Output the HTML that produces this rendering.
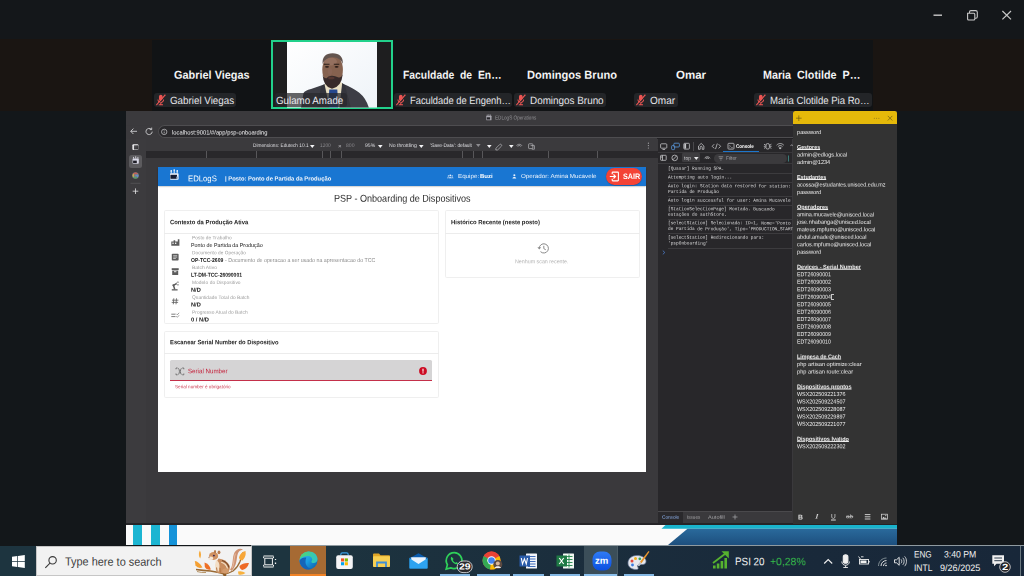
<!DOCTYPE html>
<html><head><meta charset="utf-8">
<style>
*{box-sizing:border-box;margin:0;padding:0}
html,body{width:1024px;height:576px;overflow:hidden;background:#111315;font-family:"Liberation Sans",sans-serif;}
.abs{position:absolute}
#root{position:absolute;left:0;top:0;width:1024px;height:576px;overflow:hidden;background:#111315}
.t{position:absolute;white-space:nowrap;transform-origin:0 50%;}
svg{position:absolute;overflow:visible}
</style></head><body><div id="root">
<div class="abs" style="left:0px;top:0px;width:1024px;height:576px;background:#13171a;"></div>
<div class="abs" style="left:0px;top:0px;width:1024px;height:39px;background:#14171a;"></div>
<div class="abs" style="left:0px;top:39px;width:1024px;height:71.5px;background:#1a1512;"></div>
<div class="abs" style="left:152px;top:39.5px;width:720.5px;height:71px;background:#111315;"></div>
<svg style="left:930px;top:8px" width="90" height="16" viewBox="0 0 90 16"><g fill="none" stroke="#c8c8c8" stroke-width="1.1"><path d="M3.5 7.2H12" stroke-width="1.4"/><path d="M37.6 5.200h6.200a1 1 0 0 1 1 1v4.800a1 1 0 0 1-1 1h-5.200a1 1 0 0 1-1-1z M39.500 5V4a1.400 1.400 0 0 1 1.400-1.400h4.800a1.600 1.600 0 0 1 1.600 1.600v4.600a1.400 1.400 0 0 1-1.400 1.400h-1"/><path d="M72.4 3l8.6 8.4M81 3l-8.6 8.4" stroke-width="1.2"/></g></svg>
<span class="t" style='left:174.01px;top:69px;font-size:11.5px;line-height:11.5px;color:#f4f4f4;font-weight:700;font-family:"Liberation Sans",sans-serif;transform:translateY(0.63px) rotate(.05deg) scaleX(0.9488);'>Gabriel Viegas</span>
<div class="abs" style="left:154.2px;top:92.7px;width:82.30000000000001px;height:14.2px;background:#232528;border-radius:3px"></div>
<svg style="left:155.2px;top:94px" width="11.800" height="11.800" viewBox="0 0 11 11"><g fill="#ec5553"><rect x="3.7" y="0.8" width="3.4" height="5.6" rx="1.7"/><path d="M2.3 5.2h.9c0 1.5 1 2.3 2.2 2.3s2.2-.8 2.200-2.300h.9c0 1.800-1.100 2.900-2.600 3.100V9.500H7.500v.9H3.300v-.9h1.600V8.300C3.400 8.100 2.300 7 2.300 5.200z"/></g><path d="M1.300 10.300L9.700 0.700" stroke="#ec5553" stroke-width="1.100" fill="none"/><path d="M2.100 10.900L10.300 1.400" stroke="#22252a" stroke-width=".7" fill="none"/></svg>
<span class="t" style='left:169.97px;top:94px;font-size:10.5px;line-height:10.5px;color:#e6e6ea;font-weight:400;font-family:"Liberation Sans",sans-serif;transform:translateY(0.99px) rotate(.05deg) scaleX(0.9337);'>Gabriel Viegas</span>
<span class="t" style='left:402.91px;top:69px;font-size:11.5px;line-height:11.5px;color:#f4f4f4;font-weight:700;font-family:"Liberation Sans",sans-serif;transform:translateY(0.63px) rotate(.05deg) scaleX(0.9016);'>Faculdade&nbsp; de&nbsp; En…</span>
<div class="abs" style="left:394.2px;top:92.7px;width:117.80000000000001px;height:14.2px;background:#232528;border-radius:3px"></div>
<svg style="left:395.2px;top:94px" width="11.800" height="11.800" viewBox="0 0 11 11"><g fill="#ec5553"><rect x="3.7" y="0.8" width="3.4" height="5.6" rx="1.7"/><path d="M2.3 5.2h.9c0 1.5 1 2.3 2.2 2.3s2.2-.8 2.200-2.300h.9c0 1.800-1.100 2.900-2.600 3.100V9.500H7.500v.9H3.300v-.9h1.600V8.300C3.400 8.100 2.300 7 2.300 5.200z"/></g><path d="M1.300 10.300L9.700 0.700" stroke="#ec5553" stroke-width="1.100" fill="none"/><path d="M2.100 10.900L10.300 1.400" stroke="#22252a" stroke-width=".7" fill="none"/></svg>
<span class="t" style='left:409.97px;top:94px;font-size:10.5px;line-height:10.5px;color:#e6e6ea;font-weight:400;font-family:"Liberation Sans",sans-serif;transform:translateY(0.99px) rotate(.05deg) scaleX(0.8904);'>Faculdade de Engenh…</span>
<span class="t" style='left:527.31px;top:69px;font-size:11.5px;line-height:11.5px;color:#f4f4f4;font-weight:700;font-family:"Liberation Sans",sans-serif;transform:translateY(0.63px) rotate(.05deg) scaleX(0.9651);'>Domingos Bruno</span>
<div class="abs" style="left:514.2px;top:92.7px;width:91.79999999999995px;height:14.2px;background:#232528;border-radius:3px"></div>
<svg style="left:515.2px;top:94px" width="11.800" height="11.800" viewBox="0 0 11 11"><g fill="#ec5553"><rect x="3.7" y="0.8" width="3.4" height="5.6" rx="1.7"/><path d="M2.3 5.2h.9c0 1.5 1 2.3 2.2 2.3s2.2-.8 2.200-2.300h.9c0 1.800-1.100 2.900-2.600 3.100V9.500H7.500v.9H3.300v-.9h1.600V8.300C3.400 8.100 2.300 7 2.300 5.200z"/></g><path d="M1.300 10.300L9.700 0.700" stroke="#ec5553" stroke-width="1.100" fill="none"/><path d="M2.100 10.900L10.300 1.400" stroke="#22252a" stroke-width=".7" fill="none"/></svg>
<span class="t" style='left:529.97px;top:94px;font-size:10.5px;line-height:10.5px;color:#e6e6ea;font-weight:400;font-family:"Liberation Sans",sans-serif;transform:translateY(0.99px) rotate(.05deg) scaleX(0.9414);'>Domingos Bruno</span>
<span class="t" style='left:676.31px;top:69px;font-size:11.5px;line-height:11.5px;color:#f4f4f4;font-weight:700;font-family:"Liberation Sans",sans-serif;transform:translateY(0.63px) rotate(.05deg) scaleX(0.9993);'>Omar</span>
<div class="abs" style="left:634.2px;top:92.7px;width:43.799999999999955px;height:14.2px;background:#232528;border-radius:3px"></div>
<svg style="left:635.2px;top:94px" width="11.800" height="11.800" viewBox="0 0 11 11"><g fill="#ec5553"><rect x="3.7" y="0.8" width="3.4" height="5.6" rx="1.7"/><path d="M2.3 5.2h.9c0 1.5 1 2.3 2.2 2.3s2.2-.8 2.200-2.300h.9c0 1.800-1.100 2.900-2.600 3.100V9.500H7.500v.9H3.300v-.9h1.600V8.300C3.400 8.100 2.300 7 2.300 5.200z"/></g><path d="M1.300 10.300L9.700 0.700" stroke="#ec5553" stroke-width="1.100" fill="none"/><path d="M2.100 10.900L10.300 1.400" stroke="#22252a" stroke-width=".7" fill="none"/></svg>
<span class="t" style='left:649.97px;top:94px;font-size:10.5px;line-height:10.5px;color:#e6e6ea;font-weight:400;font-family:"Liberation Sans",sans-serif;transform:translateY(0.99px) rotate(.05deg) scaleX(0.9538);'>Omar</span>
<span class="t" style='left:762.91px;top:69px;font-size:11.5px;line-height:11.5px;color:#f4f4f4;font-weight:700;font-family:"Liberation Sans",sans-serif;transform:translateY(0.63px) rotate(.05deg) scaleX(0.9352);'>Maria&nbsp; Clotilde&nbsp; P…</span>
<div class="abs" style="left:754.2px;top:92.7px;width:117.79999999999995px;height:14.2px;background:#232528;border-radius:3px"></div>
<svg style="left:755.2px;top:94px" width="11.800" height="11.800" viewBox="0 0 11 11"><g fill="#ec5553"><rect x="3.7" y="0.8" width="3.4" height="5.6" rx="1.7"/><path d="M2.3 5.2h.9c0 1.5 1 2.3 2.2 2.3s2.2-.8 2.200-2.300h.9c0 1.800-1.100 2.900-2.600 3.100V9.500H7.500v.9H3.300v-.9h1.600V8.300C3.400 8.100 2.300 7 2.300 5.200z"/></g><path d="M1.300 10.300L9.700 0.700" stroke="#ec5553" stroke-width="1.100" fill="none"/><path d="M2.100 10.900L10.300 1.400" stroke="#22252a" stroke-width=".7" fill="none"/></svg>
<span class="t" style='left:769.97px;top:94px;font-size:10.5px;line-height:10.5px;color:#e6e6ea;font-weight:400;font-family:"Liberation Sans",sans-serif;transform:translateY(0.99px) rotate(.05deg) scaleX(0.9121);'>Maria Clotilde Pia Ro…</span>
<div class="abs" style="left:271px;top:40px;width:122.2px;height:69.4px;background:#1e1e1f;border:2px solid #22d18b"></div>
<svg style="left:287px;top:42.200px" width="90" height="65.600" viewBox="0 0 90 65.600">
<defs><filter id="bl" x="-10%" y="-10%" width="120%" height="120%"><feGaussianBlur stdDeviation="0.750"/></filter>
<clipPath id="vc"><rect x="0" y="0" width="90" height="65.600"/></clipPath>
<linearGradient id="wg" x1="0" y1="0" x2="1" y2="1"><stop offset="0" stop-color="#ffffff"/><stop offset="1" stop-color="#eef3f8"/></linearGradient></defs>
<rect width="90" height="65.600" fill="url(#wg)"/>
<g clip-path="url(#vc)" filter="url(#bl)">
<path d="M14 66 L16.500 51 Q18 48.500 24 47 L37 42.500 L46 46 L55.500 41.500 Q66 46 72 50.500 Q79 56 82 66 Z" fill="#3d3e45"/>
<path d="M36.500 43.500 L41 39 L53 39 L56 42.500 L54 66 L38 66 Z" fill="#eadfc4"/>
<path d="M42.300 47.500 L50.300 47.500 L51.500 66 L41 66 Z" fill="#25468e"/>
<path d="M34 44.500 L37.500 42 L42.500 66 L30 66Z" fill="#35363c"/>
<path d="M58 43.500 L55.200 41 L52.300 66 L64 66Z" fill="#35363c"/>
<ellipse cx="45.600" cy="27.800" rx="10.300" ry="15.800" fill="#86624f"/>
<ellipse cx="43.500" cy="19.500" rx="6.500" ry="4" fill="#94705f"/>
<ellipse cx="43" cy="29.500" rx="2.300" ry="3.400" fill="#8a6555"/>
<path d="M35.500 22 Q35 11.300 45.600 11.300 Q56.200 11.300 55.900 22 Q54 15.800 45.600 15.300 Q37.800 15.800 35.500 22Z" fill="#645550"/>
<path d="M35.600 33 Q36.500 45 45 46.800 Q54.500 45 55.800 32 Q54 36.500 51 35.300 Q48 33.500 44.500 33.700 Q41 33.700 39.500 36.300 Q36.800 36.500 35.600 33Z" fill="#382c2b"/>
<ellipse cx="44.300" cy="36" rx="3.300" ry="1.300" fill="#553730"/>
<path d="M37 22.300h5.500M46.800 22.300h5.500" stroke="#2a1c19" stroke-width="1.100"/>
<ellipse cx="40" cy="24.800" rx="2" ry=".9" fill="#2a1c18"/><ellipse cx="49.600" cy="24.800" rx="2" ry=".9" fill="#2a1c18"/>
</g></svg>
<div class="abs" style="left:274.5px;top:93px;width:72.2px;height:13.8px;background:rgba(40,40,44,0.72);border-radius:3px"></div>
<span class="t" style='left:276.37px;top:94px;font-size:10.5px;line-height:10.5px;color:#e9e9ee;font-weight:400;font-family:"Liberation Sans",sans-serif;transform:translateY(0.99px) rotate(.05deg) scaleX(0.9290);'>Gulamo Amade</span>
<div class="abs" style="left:0;top:0;width:1024px;height:576px;filter:blur(.32px)">
<div class="abs" style="left:126px;top:110.5px;width:771px;height:434.79999999999995px;background:#3a393c;"></div>
<div class="abs" style="left:126px;top:110.5px;width:666.5px;height:14.6px;background:#3b3a3d;"></div>
<span class="t" style='left:495.36px;top:115px;font-size:5.6px;line-height:5.6px;color:#908f93;font-weight:400;font-family:"Liberation Sans",sans-serif;transform:translateY(0.58px) rotate(.05deg) scaleX(0.8299);'>EDLogS Operations</span>
<svg style="left:486.200px;top:114.300px" width="6" height="6.600" viewBox="0 0 6 6.600"><rect x=".3" y="1.800" width="5.200" height="4.500" rx=".5" fill="#a9a8b0"/><rect x=".9" y="3.300" width="3.200" height="2.200" fill="#26252a"/><path d="M1.200 .5v1.500M2.900 .1v1.900M4.600 .5v1.500" stroke="#a9a8b0" stroke-width=".7"/></svg>
<div class="abs" style="left:126px;top:125.6px;width:666.5px;height:13px;background:#3b3a3d;"></div>
<div class="abs" style="left:157.8px;top:125.1px;width:640px;height:13.3px;background:#2a292c;border-radius:6.600px 0 0 6.600px;border:.8px solid #4e4d50;border-right:none"></div>
<div class="abs" style="left:657px;top:138.4px;width:135.5px;height:0.8px;background:#222124;"></div>
<span class="t" style='left:171.53px;top:129px;font-size:6.1px;line-height:6.1px;color:#ececee;font-weight:400;font-family:"Liberation Sans",sans-serif;transform:translateY(0.47px) rotate(.05deg) scaleX(0.9526);'>localhost:9001/#/app/psp-onboarding</span>
<svg style="left:129px;top:125.300px" width="44" height="13" viewBox="0 0 44 13"><g fill="none" stroke="#d0d0d2" stroke-width=".9"><path d="M8 6.300H1.800M4.400 3.600L1.700 6.300l2.700 2.700"/><path d="M22.300 4.300a3.100 3.100 0 1 0 .9 2.300M22.700 2.600v2h-2" /><circle cx="35.200" cy="6.900" r="2.700" stroke-width=".7"/><path d="M35.200 6.500v1.900M35.200 5.300v.6" stroke-width=".7"/></g></svg>
<div class="abs" style="left:126px;top:139px;width:20px;height:386.3px;background:#3c3b3e;"></div>
<div class="abs" style="left:129px;top:155px;width:12.5px;height:12.5px;background:#5c5b5e;border-radius:2.500px"></div>
<svg style="left:128px;top:140px" width="16" height="60" viewBox="0 0 16 60"><defs><linearGradient id="tg" x1="0" y1="0" x2="1" y2="1"><stop offset="0" stop-color="#5a595d"/><stop offset="1" stop-color="#2c2b2e"/></linearGradient></defs><rect x="4.400" y="4.200" width="6" height="5.900" rx="1" fill="#f2f2f4"/><rect x="5.900" y="5.300" width="4.500" height="4.300" rx=".5" fill="url(#tg)"/><rect x="4.600" y="18.400" width="6.200" height="5.400" rx=".7" fill="#d9d9e6"/><rect x="5.100" y="20.600" width="3.700" height="2.500" fill="#1f1e26"/><path d="M5.500 16.900v1.700M7.700 16.300v2.200M9.900 16.900v1.700" stroke="#e4e4ee" stroke-width=".8"/><circle cx="7.500" cy="35.500" r="3.300" fill="#7d7c80"/><g fill="none" stroke-width="1.300" opacity=".8"><path d="M5.600 34.200A2.300 2.300 0 0 1 9.200 33.900" stroke="#e0564a"/><path d="M5.600 36.800A2.300 2.300 0 0 1 5.600 34.200" stroke="#e8b83a"/><path d="M9.300 37A2.300 2.300 0 0 1 5.600 36.800" stroke="#4aa862"/><path d="M7.600 35.500h2.200A2.300 2.300 0 0 1 9.300 37" stroke="#5a8ee0"/></g><path d="M2.500 43.300h10" stroke="#5f5e62" stroke-width=".6"/><path d="M4.700 51.200h5.600M7.500 48.400v5.600" stroke="#e4e4e6" stroke-width=".8"/></svg>
<div class="abs" style="left:146px;top:139.1px;width:511.5px;height:12.2px;background:#3b3a3d;"></div>
<div class="abs" style="left:146px;top:150.7px;width:511.5px;height:7.6px;background:#29282b;"></div>
<div class="abs" style="left:206.2px;top:150.7px;width:0.9px;height:7.6px;background:#58575a;"></div>
<div class="abs" style="left:255.5px;top:150.7px;width:0.9px;height:7.6px;background:#58575a;"></div>
<div class="abs" style="left:321.5px;top:150.7px;width:0.9px;height:7.6px;background:#58575a;"></div>
<div class="abs" style="left:330.4px;top:150.7px;width:0.9px;height:7.6px;background:#58575a;"></div>
<div class="abs" style="left:341px;top:150.7px;width:0.9px;height:7.6px;background:#58575a;"></div>
<div class="abs" style="left:462px;top:150.7px;width:0.9px;height:7.6px;background:#58575a;"></div>
<div class="abs" style="left:472.5px;top:150.7px;width:0.9px;height:7.6px;background:#58575a;"></div>
<div class="abs" style="left:482px;top:150.7px;width:0.9px;height:7.6px;background:#58575a;"></div>
<div class="abs" style="left:548px;top:150.7px;width:0.9px;height:7.6px;background:#58575a;"></div>
<div class="abs" style="left:597px;top:150.7px;width:0.9px;height:7.6px;background:#58575a;"></div>
<span class="t" style='left:252.99px;top:143px;font-size:5.2px;line-height:5.2px;color:#dedee2;font-weight:400;font-family:"Liberation Sans",sans-serif;transform:translateY(0.04px) rotate(.05deg) scaleX(0.9175);'>Dimensions: Edutech 10.1</span>
<svg style="left:310.10px;top:144.60px" width="4.6" height="3.0" viewBox="0 0 4.6 3.0"><path d="M0 0H4.6L2.3 3.0z" fill="#f4f4f6"/></svg>
<span class="t" style='left:319.69px;top:143px;font-size:5.2px;line-height:5.2px;color:#8a898d;font-weight:400;font-family:"Liberation Sans",sans-serif;transform:translateY(0.04px) rotate(.05deg) scaleX(0.9322);'>1200</span>
<span class="t" style='left:338.46px;top:143px;font-size:5.6px;line-height:5.6px;color:#b5b4b8;font-weight:400;font-family:"Liberation Sans",sans-serif;transform:translateY(0.88px) rotate(.05deg) scaleX(1.1272);'>×</span>
<span class="t" style='left:345.69px;top:143px;font-size:5.2px;line-height:5.2px;color:#8a898d;font-weight:400;font-family:"Liberation Sans",sans-serif;transform:translateY(0.04px) rotate(.05deg) scaleX(0.9777);'>800</span>
<span class="t" style='left:365.49px;top:143px;font-size:5.2px;line-height:5.2px;color:#dedee2;font-weight:400;font-family:"Liberation Sans",sans-serif;transform:translateY(0.04px) rotate(.05deg) scaleX(0.9781);'>95%</span>
<svg style="left:377.95px;top:144.60px" width="4.6" height="3.0" viewBox="0 0 4.6 3.0"><path d="M0 0H4.6L2.3 3.0z" fill="#f4f4f6"/></svg>
<span class="t" style='left:388.69px;top:143px;font-size:5.2px;line-height:5.2px;color:#dedee2;font-weight:400;font-family:"Liberation Sans",sans-serif;transform:translateY(0.04px) rotate(.05deg) scaleX(0.9921);'>No throttling</span>
<svg style="left:418.95px;top:144.60px" width="4.6" height="3.0" viewBox="0 0 4.6 3.0"><path d="M0 0H4.6L2.3 3.0z" fill="#f4f4f6"/></svg>
<span class="t" style='left:429.69px;top:143px;font-size:5.2px;line-height:5.2px;color:#dedee2;font-weight:400;font-family:"Liberation Sans",sans-serif;transform:translateY(0.04px) rotate(.05deg) scaleX(0.9335);'>'Save-Data': default</span>
<svg style="left:475.95px;top:144.40px" width="4.6" height="3.0" viewBox="0 0 4.6 3.0"><path d="M0 0H4.6L2.3 3.0z" fill="#8c8b8f"/></svg>
<svg style="left:487.45px;top:144.60px" width="4.6" height="3.0" viewBox="0 0 4.6 3.0"><path d="M0 0H4.6L2.3 3.0z" fill="#f4f4f6"/></svg>
<svg style="left:509.25px;top:144.60px" width="4.6" height="3.0" viewBox="0 0 4.6 3.0"><path d="M0 0H4.6L2.3 3.0z" fill="#f4f4f6"/></svg>
<svg style="left:494px;top:141px" width="45" height="10" viewBox="0 0 45 10"><g fill="none" stroke="#b8b8bb" stroke-width=".7"><path d="M2 7.200l3.600-3.600a1.200 1.200 0 0 1 1.700 1.700L3.700 8.900 1.800 9z"/><path d="M22.500 4.800c1.200-2 4.300-2 5.500 0M23.800 5.600a1.500 1.500 0 0 1 2.900 0"/><rect x="34.600" y="2.800" width="4.200" height="4.800" rx=".6"/><path d="M36.600 4.600h3.800v3.600h-2.600"/></g></svg>
<svg style="left:647px;top:141.500px" width="3" height="8" viewBox="0 0 3 8"><g fill="#a8a8ab"><circle cx="1.400" cy="1.200" r=".6"/><circle cx="1.400" cy="3.600" r=".6"/><circle cx="1.400" cy="6" r=".6"/></g></svg>
<div class="abs" style="left:157.8px;top:166.8px;width:488.49999999999994px;height:305.2px;background:#ffffff;"></div>
<div class="abs" style="left:157.8px;top:166.8px;width:488.49999999999994px;height:19.1px;background:#1976d2;box-shadow:0 .8px 1.600px rgba(0,0,0,.35)"></div>
<svg style="left:169px;top:168.500px" width="11" height="12" viewBox="0 0 11 12"><rect x="1" y="4.200" width="8.600" height="6.600" rx=".8" fill="#eef3fa"/><rect x="1.400" y="5.800" width="6.600" height="4" fill="#141c33"/><rect x="7.300" y="7.600" width="1.800" height="2.200" fill="#9fb2cc"/><path d="M2.200 2.200v2.200M5.200 1.300v3M8.200 2.200v2.200" stroke="#eef3fa" stroke-width="1"/><circle cx="2.200" cy="1.900" r=".8" fill="#fff"/><circle cx="5.200" cy="1.100" r=".8" fill="#fff"/><circle cx="8.200" cy="1.900" r=".8" fill="#fff"/></svg>
<span class="t" style='left:188.31px;top:175px;font-size:8.2px;line-height:8.2px;color:#ffffff;font-weight:400;font-family:"Liberation Sans",sans-serif;transform:translateY(0.20px) rotate(.05deg) scaleX(0.9453);'>EDLogS</span>
<span class="t" style='left:224.95px;top:176px;font-size:5.9px;line-height:5.9px;color:#f2f6fc;font-weight:700;font-family:"Liberation Sans",sans-serif;transform:translateY(0.45px) rotate(.05deg) scaleX(0.9893);'>| Posto: Ponto de Partida da Produção</span>
<svg style="left:447.300px;top:174.300px" width="6.600" height="4.950" viewBox="0 0 8 6"><g fill="#e8f0fb"><circle cx="4" cy="1.700" r="1.100"/><circle cx="1.700" cy="2.300" r=".8"/><circle cx="6.300" cy="2.300" r=".8"/><path d="M2 5.200c0-1.600 4-1.600 4 0zM.2 5.200c0-1.200 1.300-1.500 2-1.300-.6.300-.8.800-.8 1.300zM7.800 5.200c0-1.200-1.300-1.500-2-1.300.6.300.8.800.8 1.300z"/></g></svg>
<span class="t" style='left:457.85px;top:174px;font-size:5.9px;line-height:5.9px;color:#eef4fc;font-weight:400;font-family:"Liberation Sans",sans-serif;transform:translateY(0.05px) rotate(.05deg) scaleX(1.0571);'>Equipe:</span>
<span class="t" style='left:479.95px;top:174px;font-size:5.9px;line-height:5.9px;color:#ffffff;font-weight:700;font-family:"Liberation Sans",sans-serif;transform:translateY(0.05px) rotate(.05deg) scaleX(1.0232);'>Buzi</span>
<svg style="left:511.700px;top:174.200px" width="5" height="5" viewBox="0 0 6 6"><g fill="#e8f0fb"><circle cx="2.800" cy="1.500" r="1.250"/><path d="M.5 5.400c0-2.600 4.600-2.600 4.600 0z"/></g></svg>
<span class="t" style='left:521.05px;top:174px;font-size:5.9px;line-height:5.9px;color:#eef4fc;font-weight:400;font-family:"Liberation Sans",sans-serif;transform:translateY(0.05px) rotate(.05deg) scaleX(1.0579);'>Operador: Amina Mucavele</span>
<div class="abs" style="left:605.6px;top:167.9px;width:36px;height:17px;background:#f44336;border-radius:8.500px;box-shadow:0 .5px 1px rgba(0,0,0,.3)"></div>
<svg style="left:608.500px;top:171.200px" width="11" height="11" viewBox="0 0 11 11"><g fill="none" stroke="#fff" stroke-width="1.100"><path d="M3.200 3.200V1.700a.6.600 0 0 1 .6-.6h5a.6.600 0 0 1 .6.600v7.600a.6.600 0 0 1-.6.600h-5a.6.600 0 0 1-.6-.6V7.800"/><path d="M.8 5.500h5.600M4.500 3.500l2 2-2 2"/></g></svg>
<span class="t" style='left:622.53px;top:173px;font-size:7.9px;line-height:7.9px;color:#ffffff;font-weight:700;font-family:"Liberation Sans",sans-serif;transform:translateY(0.02px) rotate(.05deg) scaleX(0.9176);'>SAIR</span>
<span class="t" style='left:333.70px;top:193px;font-size:10px;line-height:10px;color:#2a2a2a;font-weight:400;font-family:"Liberation Sans",sans-serif;transform:translateY(0.65px) rotate(.05deg) scaleX(0.9045);'>PSP - Onboarding de Dispositivos</span>
<div class="abs" style="left:163.6px;top:210.4px;width:275.1px;height:114.1px;background:#fff;border:.7px solid #efefef;border-radius:1.600px;"></div>
<div class="abs" style="left:163.6px;top:233.1px;width:275.1px;height:0.6px;background:#ececec;"></div>
<span class="t" style='left:169.92px;top:219px;font-size:6.3px;line-height:6.3px;color:#1d1d1d;font-weight:700;font-family:"Liberation Sans",sans-serif;transform:translateY(0.29px) rotate(.05deg) scaleX(0.9307);'>Contexto da Produção Ativa</span>
<span class="t" style='left:191.51px;top:236px;font-size:4.9px;line-height:4.9px;color:#9a9a9a;font-weight:400;font-family:"Liberation Sans",sans-serif;transform:translateY(0.27px) rotate(.05deg) scaleX(0.9776);letter-spacing:.05px;'>Posto de Trabalho</span>
<span class="t" style='left:191.46px;top:242px;font-size:5.7px;line-height:5.7px;color:#161616;font-weight:400;font-family:"Liberation Sans",sans-serif;transform:translateY(0.98px) rotate(.05deg) scaleX(0.9408);'>Ponto de Partida da Produção</span>
<span class="t" style='left:191.51px;top:251px;font-size:4.9px;line-height:4.9px;color:#9a9a9a;font-weight:400;font-family:"Liberation Sans",sans-serif;transform:translateY(0.17px) rotate(.05deg) scaleX(0.9683);letter-spacing:.05px;'>Documento de Operação</span>
<span class="t" style='left:191.46px;top:257px;font-size:5.7px;line-height:5.7px;color:#161616;font-weight:700;font-family:"Liberation Sans",sans-serif;transform:translateY(0.88px) rotate(.05deg) scaleX(0.8886);'>OP-TCC-2609</span>
<span class="t" style='left:191.51px;top:266px;font-size:4.9px;line-height:4.9px;color:#9a9a9a;font-weight:400;font-family:"Liberation Sans",sans-serif;transform:translateY(0.07px) rotate(.05deg) scaleX(0.9962);letter-spacing:.05px;'>Batch Ativo</span>
<span class="t" style='left:191.46px;top:272px;font-size:5.7px;line-height:5.7px;color:#161616;font-weight:700;font-family:"Liberation Sans",sans-serif;transform:translateY(0.78px) rotate(.05deg) scaleX(0.8835);'>LT-DM-TCC-26090001</span>
<span class="t" style='left:191.51px;top:280px;font-size:4.9px;line-height:4.9px;color:#9a9a9a;font-weight:400;font-family:"Liberation Sans",sans-serif;transform:translateY(0.97px) rotate(.05deg) scaleX(0.9945);letter-spacing:.05px;'>Modelo do Dispositivo</span>
<span class="t" style='left:191.46px;top:287px;font-size:5.7px;line-height:5.7px;color:#161616;font-weight:700;font-family:"Liberation Sans",sans-serif;transform:translateY(0.68px) rotate(.05deg) scaleX(0.9909);'>N/D</span>
<span class="t" style='left:191.51px;top:295px;font-size:4.9px;line-height:4.9px;color:#9a9a9a;font-weight:400;font-family:"Liberation Sans",sans-serif;transform:translateY(0.87px) rotate(.05deg) scaleX(0.9766);letter-spacing:.05px;'>Quantidade Total do Batch</span>
<span class="t" style='left:191.46px;top:302px;font-size:5.7px;line-height:5.7px;color:#161616;font-weight:700;font-family:"Liberation Sans",sans-serif;transform:translateY(0.58px) rotate(.05deg) scaleX(0.9909);'>N/D</span>
<span class="t" style='left:191.51px;top:310px;font-size:4.9px;line-height:4.9px;color:#9a9a9a;font-weight:400;font-family:"Liberation Sans",sans-serif;transform:translateY(0.77px) rotate(.05deg) scaleX(0.9866);letter-spacing:.05px;'>Progresso Atual do Batch</span>
<span class="t" style='left:191.46px;top:317px;font-size:5.7px;line-height:5.7px;color:#161616;font-weight:700;font-family:"Liberation Sans",sans-serif;transform:translateY(0.48px) rotate(.05deg) scaleX(1.0116);'>0 / N/D</span>
<span class="t" style='left:224.66px;top:257px;font-size:5.7px;line-height:5.7px;color:#8d8d8d;font-weight:400;font-family:"Liberation Sans",sans-serif;transform:translateY(0.88px) rotate(.05deg) scaleX(0.9273);'>- Documento de operacao a ser usado na apresentacao do TCC</span>
<svg style="left:170px;top:236px" width="12" height="90" viewBox="0 0 12 90"><g fill="#5c5c5c">
<path d="M1.300 9.800V5.600h2.300V4.200h1.600v1.400h2.600V3.300h1.600v6.500z"/><rect x="2.400" y="6.600" width="1.300" height="1.300" fill="#fff"/><rect x="5" y="6.600" width="1.300" height="1.300" fill="#fff"/>
<rect x="1.800" y="17.700" width="6.800" height="6.800" rx=".8"/><path d="M3.200 19.700h4M3.200 21.100h4M3.200 22.500h2.600" stroke="#fff" stroke-width=".6"/>
<rect x="1.700" y="32.200" width="7" height="1.900"/><path d="M2.200 34.600h6v4.400h-6z"/><rect x="4" y="35.300" width="2.400" height=".9" fill="#fff"/>
<path d="M1.800 54.500h5.800v-1.300H1.800z"/><path d="M4.700 53.400L3.600 49.600M3.400 49.300L6.400 47.600" stroke="#5c5c5c" stroke-width="1.500" fill="none"/><circle cx="3.400" cy="49.300" r="1.100"/><path d="M8.900 46.300a1.500 1.500 0 1 0 0 2.400" fill="none" stroke="#5c5c5c" stroke-width=".7"/>
<path d="M3.800 62.300L3.300 68.300M6.500 62.300L6 68.300M2 64.200h6.400M1.700 66.400h6.400" stroke="#5c5c5c" stroke-width=".8" fill="none"/>
<path d="M1.300 78.200h4.200M1.300 80.600h4.200" stroke="#5c5c5c" stroke-width=".8" fill="none"/><path d="M6.300 80.300l1 1 1.800-2M6.300 77.800l1 1 1.800-2" stroke="#5c5c5c" stroke-width=".6" fill="none"/>
</g></svg>
<div class="abs" style="left:163.6px;top:330.6px;width:275.1px;height:67.5px;background:#fff;border:.7px solid #efefef;border-radius:1.600px;"></div>
<div class="abs" style="left:163.6px;top:353.1px;width:275.1px;height:0.6px;background:#ececec;"></div>
<span class="t" style='left:169.92px;top:339px;font-size:6.3px;line-height:6.3px;color:#1d1d1d;font-weight:700;font-family:"Liberation Sans",sans-serif;transform:translateY(0.29px) rotate(.05deg) scaleX(0.9240);'>Escanear Serial Number do Dispositivo</span>
<div class="abs" style="left:170.2px;top:360.3px;width:262.3px;height:21.2px;background:#d5d4d5;border-radius:1.500px 1.500px 0 0;border-bottom:1px solid #c4304a"></div>
<svg style="left:174.500px;top:366.500px" width="10" height="9" viewBox="0 0 10 9"><g fill="none" stroke="#6a6a6a" stroke-width=".9"><path d="M1 2.300V1h1.600M7.200 1H8.800v1.300M8.800 6.500v1.300H7.200M2.600 7.800H1V6.500M3.400 1.300c1.400 1.600 1.400 4.600 0 6.200M6.400 1.300c-1.400 1.600-1.400 4.600 0 6.200"/></g></svg>
<span class="t" style='left:188.41px;top:368px;font-size:6.5px;line-height:6.5px;color:#c4203a;font-weight:400;font-family:"Liberation Sans",sans-serif;transform:translateY(0.20px) rotate(.05deg) scaleX(0.9502);'>Serial Number</span>
<svg style="left:419.300px;top:366.800px" width="8" height="8" viewBox="0 0 8 8"><circle cx="4" cy="4" r="3.900" fill="#cc0a22"/><rect x="3.450" y="1.700" width="1.100" height="3" fill="#fff"/><rect x="3.450" y="5.300" width="1.100" height="1.100" fill="#fff"/></svg>
<span class="t" style='left:174.52px;top:385px;font-size:4.7px;line-height:4.7px;color:#c8324a;font-weight:400;font-family:"Liberation Sans",sans-serif;transform:translateY(0.25px) rotate(.05deg) scaleX(0.9836);'>Serial number é obrigatório</span>
<div class="abs" style="left:445.3px;top:210.4px;width:194.7px;height:67.4px;background:#fff;border:.7px solid #efefef;border-radius:1.600px;"></div>
<div class="abs" style="left:445.3px;top:233.1px;width:194.7px;height:0.6px;background:#ececec;"></div>
<span class="t" style='left:451.32px;top:219px;font-size:6.3px;line-height:6.3px;color:#1d1d1d;font-weight:700;font-family:"Liberation Sans",sans-serif;transform:translateY(0.29px) rotate(.05deg) scaleX(0.9371);'>Histórico Recente (neste posto)</span>
<svg style="left:536.500px;top:241.500px" width="13" height="13" viewBox="0 0 13 13"><g fill="none" stroke="#8a8a8a" stroke-width="1"><path d="M2.200 6.300a4.600 4.600 0 1 1 1.300 3.300"/><path d="M6.800 3.800v2.800l2 1.200"/></g><path d="M.4 5.300h3.800L2.300 7.500z" fill="#8a8a8a"/></svg>
<span class="t" style='left:515.47px;top:259px;font-size:5.5px;line-height:5.5px;color:#b2b2b2;font-weight:400;font-family:"Liberation Sans",sans-serif;transform:translateY(0.32px) rotate(.05deg) scaleX(0.9665);'>Nenhum scan recente.</span>
<div class="abs" style="left:657.6px;top:139.1px;width:134.69999999999993px;height:386.2px;background:#28272a;"></div>
<div class="abs" style="left:657.6px;top:151.5px;width:134.69999999999993px;height:0.5px;background:#39383b;"></div>
<div class="abs" style="left:657.6px;top:163.3px;width:134.69999999999993px;height:0.6px;background:#3a393c;"></div>
<div class="abs" style="left:693px;top:141.5px;width:0.6px;height:9px;background:#4a494c;"></div>
<div class="abs" style="left:722.8px;top:150.8px;width:36.2px;height:1.1px;background:#1d76cc;"></div>
<span class="t" style='left:736.48px;top:144px;font-size:5.3px;line-height:5.3px;color:#ffffff;font-weight:700;font-family:"Liberation Sans",sans-serif;transform:translateY(0.10px) rotate(.05deg) scaleX(0.8453);'>Console</span>
<svg style="left:658px;top:140px" width="134" height="24" viewBox="0 0 134 24"><g fill="none" stroke="#c4c4c7" stroke-width=".8">
<rect x="2.600" y="3.800" width="6.200" height="4.400" rx=".8"/><path d="M4.500 9.500h2.600"/>
<g stroke="#5a9be0"><rect x="15.800" y="3.200" width="5.600" height="3.800" rx="1"/><rect x="13.600" y="5.600" width="3" height="4" rx=".8"/></g>
<rect x="25.800" y="3.300" width="5.600" height="5.800" rx=".9"/><rect x="26.300" y="3.800" width="1.800" height="4.800" fill="#c4c4c7" stroke="none"/>
<path d="M40.500 9.300V6l2.700-2.600L45.900 6v3.300h-1.700V7.300a1 1 0 0 0-2 0v2z"/>
<path d="M56.200 4.200L54.200 6.300l2 2.100M60.600 4.200l2 2.100-2 2.100M59.300 3.500l-1.800 5.600"/>
<rect x="70" y="3.300" width="6" height="5.800" rx=".8"/><path d="M71.300 5.300l1.200 1-1.200 1M73.200 7.600h1.600" stroke-width=".6"/>
<rect x="108" y="3.600" width="3.400" height="5.400" rx="1.400"/><path d="M106 4.200l1.600 1M106 8.400l1.600-1M113.400 4.200l-1.600 1M113.400 8.400l-1.600-1M105.800 6.300h1.800M111.800 6.300h1.800"/>
<path d="M118.600 5.200c2-2.200 5.200-2.200 7.200 0M119.900 6.600c1.300-1.400 3.300-1.400 4.600 0"/><path d="M121.200 7.800h2l-1 1.300z" fill="#c4c4c7"/>
<path d="M132.500 5.600c.8-.8 1.500-.8 2.300 0"/>
<rect x="2.600" y="15.300" width="5.600" height="5" rx=".6"/><path d="M4.500 15.300v5M2.600 17h1.900"/>
<circle cx="16.700" cy="17.900" r="2.800"/><path d="M14.800 19.900l3.800-4"/>
<path d="M46.500 18.300c1.300-2 4.300-2 5.600 0M47.800 19a1.600 1.600 0 0 1 3 0"/>
</g></svg>
<div class="abs" style="left:681.8px;top:153.3px;width:18.7px;height:9.2px;background:#3e3d40;border-radius:1.200px"></div>
<span class="t" style='left:684.20px;top:155px;font-size:5px;line-height:5px;color:#c8c8cb;font-weight:400;font-family:"Liberation Sans",sans-serif;transform:translateY(0.73px) rotate(.05deg) scaleX(0.9989);'>top</span>
<svg style="left:693.75px;top:156.60px" width="4.6" height="3.0" viewBox="0 0 4.6 3.0"><path d="M0 0H4.6L2.3 3.0z" fill="#e8e8ea"/></svg>
<div class="abs" style="left:714px;top:153.5px;width:72.7px;height:9px;background:#3b3a3d;border-radius:4.500px"></div>
<svg style="left:718px;top:155.500px" width="6" height="5" viewBox="0 0 6 5"><path d="M.6.800h4.600M1.400 2.400h3M2.300 4h1.200" stroke="#a8a8ab" stroke-width=".7" fill="none"/></svg>
<span class="t" style='left:725.70px;top:155px;font-size:5px;line-height:5px;color:#a4a4a8;font-weight:400;font-family:"Liberation Sans",sans-serif;transform:translateY(0.83px) rotate(.05deg) scaleX(0.9569);'>Filter</span>
<span class="t" style='left:788.00px;top:155px;font-size:5px;line-height:5px;color:#3f8f8a;font-weight:400;font-family:"Liberation Sans",sans-serif;transform:translateY(0.83px) rotate(.05deg) scaleX(0.4646);'>▌</span>
<span class="t" style='left:668.32px;top:166px;font-size:4.7px;line-height:4.7px;color:#dededf;font-weight:400;font-family:"Liberation Mono",monospace;transform:translateY(0.70px) rotate(.05deg) scaleX(0.9516);'>[Quasar] Running SPA.</span>
<span class="t" style='left:668.32px;top:175px;font-size:4.7px;line-height:4.7px;color:#dededf;font-weight:400;font-family:"Liberation Mono",monospace;transform:translateY(0.50px) rotate(.05deg) scaleX(0.9507);'>Attempting auto login...</span>
<span class="t" style='left:668.32px;top:184px;font-size:4.7px;line-height:4.7px;color:#dededf;font-weight:400;font-family:"Liberation Mono",monospace;transform:translateY(0.30px) rotate(.05deg) scaleX(0.9472);'>Auto login: Station data restored for station: Ponto de</span>
<span class="t" style='left:668.32px;top:189px;font-size:4.7px;line-height:4.7px;color:#dededf;font-weight:400;font-family:"Liberation Mono",monospace;transform:translateY(0.90px) rotate(.05deg) scaleX(0.9523);'>Partida de Produção</span>
<span class="t" style='left:668.32px;top:198px;font-size:4.7px;line-height:4.7px;color:#dededf;font-weight:400;font-family:"Liberation Mono",monospace;transform:translateY(0.60px) rotate(.05deg) scaleX(0.9477);'>Auto login successful for user: Amina Mucavele</span>
<span class="t" style='left:668.32px;top:207px;font-size:4.7px;line-height:4.7px;color:#dededf;font-weight:400;font-family:"Liberation Mono",monospace;transform:translateY(0.30px) rotate(.05deg) scaleX(0.9482);'>[StationSelectionPage] Montada. Buscando</span>
<span class="t" style='left:668.32px;top:212px;font-size:4.7px;line-height:4.7px;color:#dededf;font-weight:400;font-family:"Liberation Mono",monospace;transform:translateY(0.80px) rotate(.05deg) scaleX(0.9512);'>estações do authStore.</span>
<span class="t" style='left:668.32px;top:221px;font-size:4.7px;line-height:4.7px;color:#dededf;font-weight:400;font-family:"Liberation Mono",monospace;transform:translateY(0.30px) rotate(.05deg) scaleX(0.9477);'>[selectStation] Selecionada: ID=1, Nome='Ponto</span>
<span class="t" style='left:668.32px;top:227px;font-size:4.7px;line-height:4.7px;color:#dededf;font-weight:400;font-family:"Liberation Mono",monospace;transform:translateY(0.10px) rotate(.05deg) scaleX(0.9476);'>de Partida de Produção', Tipo='PRODUCTION_START'</span>
<span class="t" style='left:668.32px;top:235px;font-size:4.7px;line-height:4.7px;color:#dededf;font-weight:400;font-family:"Liberation Mono",monospace;transform:translateY(0.70px) rotate(.05deg) scaleX(0.9486);'>[selectStation] Redirecionando para:</span>
<span class="t" style='left:668.32px;top:241px;font-size:4.7px;line-height:4.7px;color:#dededf;font-weight:400;font-family:"Liberation Mono",monospace;transform:translateY(0.60px) rotate(.05deg) scaleX(0.9543);'>'pspOnboarding'</span>
<div class="abs" style="left:668px;top:172.6px;width:124.3px;height:0.6px;background:#3c3b3e;"></div>
<div class="abs" style="left:668px;top:181.6px;width:124.3px;height:0.6px;background:#3c3b3e;"></div>
<div class="abs" style="left:668px;top:196px;width:124.3px;height:0.6px;background:#3c3b3e;"></div>
<div class="abs" style="left:668px;top:204.7px;width:124.3px;height:0.6px;background:#3c3b3e;"></div>
<div class="abs" style="left:668px;top:219px;width:124.3px;height:0.6px;background:#3c3b3e;"></div>
<div class="abs" style="left:668px;top:233.1px;width:124.3px;height:0.6px;background:#3c3b3e;"></div>
<div class="abs" style="left:668px;top:247.7px;width:124.3px;height:0.6px;background:#3c3b3e;"></div>
<svg style="left:662.300px;top:249.600px" width="4" height="5" viewBox="0 0 4 5"><path d="M.8.600l2 1.900-2 1.900" stroke="#4d7fd0" stroke-width=".8" fill="none"/></svg>
<div class="abs" style="left:657.6px;top:511px;width:134.69999999999993px;height:0.6px;background:#4a494c;"></div>
<div class="abs" style="left:657.6px;top:511.6px;width:134.69999999999993px;height:11.7px;background:#3a393c;"></div>
<div class="abs" style="left:126px;top:523.3px;width:771px;height:2px;background:#252427;"></div>
<div class="abs" style="left:657.6px;top:511.6px;width:25.4px;height:11.6px;background:#2a292c;"></div>
<span class="t" style='left:661.71px;top:515px;font-size:4.8px;line-height:4.8px;color:#8fb4f0;font-weight:400;font-family:"Liberation Sans",sans-serif;transform:translateY(0.71px) rotate(.05deg) scaleX(0.9783);'>Console</span>
<span class="t" style='left:686.91px;top:515px;font-size:4.8px;line-height:4.8px;color:#a9a9ac;font-weight:400;font-family:"Liberation Sans",sans-serif;transform:translateY(0.71px) rotate(.05deg) scaleX(0.9534);'>Issues</span>
<span class="t" style='left:708.31px;top:515px;font-size:4.8px;line-height:4.8px;color:#a9a9ac;font-weight:400;font-family:"Liberation Sans",sans-serif;transform:translateY(0.71px) rotate(.05deg) scaleX(1.1680);'>Autofill</span>
<svg style="left:731.500px;top:514.300px" width="6" height="6" viewBox="0 0 6 6"><path d="M.5 3h5M3 .5v5" stroke="#a9a9ac" stroke-width=".7"/></svg>
<div class="abs" style="left:792.5px;top:111.2px;width:104.20000000000005px;height:412.4px;background:#333333;border-radius:2.500px 2.500px 0 0"></div>
<div class="abs" style="left:792.5px;top:111.2px;width:104.20000000000005px;height:13px;background:#e5b90a;border-radius:2.500px 2.500px 0 0"></div>
<svg style="left:795px;top:113.500px" width="100" height="9" viewBox="0 0 100 9"><g stroke="#6b5a16" stroke-width=".7" fill="none"><path d="M1 4.200h5.600M3.800 1.400v5.600"/><path d="M92.800 1.900l4.500 4.600M97.300 1.900l-4.500 4.600"/></g><g fill="#8a7420"><circle cx="79.300" cy="4.300" r=".5"/><circle cx="81.600" cy="4.300" r=".5"/><circle cx="83.900" cy="4.300" r=".5"/></g></svg>
<span class="t" style='left:797.06px;top:130px;font-size:5.7px;line-height:5.7px;color:#eeeeee;font-weight:400;font-family:"Liberation Sans",sans-serif;transform:translateY(0.03px) rotate(.05deg) scaleX(0.9944);'>password</span>
<span class="t" style='left:797.06px;top:145px;font-size:5.7px;line-height:5.7px;color:#eeeeee;font-weight:700;font-family:"Liberation Sans",sans-serif;transform:translateY(0.00px) rotate(.05deg) scaleX(0.9366);text-decoration:underline;text-decoration-thickness:.5px;text-underline-offset:.4px;'>Gestores</span>
<span class="t" style='left:797.06px;top:152px;font-size:5.7px;line-height:5.7px;color:#eeeeee;font-weight:400;font-family:"Liberation Sans",sans-serif;transform:translateY(0.48px) rotate(.05deg) scaleX(0.9765);'>admin@edlogs.local</span>
<span class="t" style='left:797.06px;top:159px;font-size:5.7px;line-height:5.7px;color:#eeeeee;font-weight:400;font-family:"Liberation Sans",sans-serif;transform:translateY(0.97px) rotate(.05deg) scaleX(0.9790);'>admin@1234</span>
<span class="t" style='left:797.06px;top:174px;font-size:5.7px;line-height:5.7px;color:#eeeeee;font-weight:700;font-family:"Liberation Sans",sans-serif;transform:translateY(0.93px) rotate(.05deg) scaleX(0.9523);text-decoration:underline;text-decoration-thickness:.5px;text-underline-offset:.4px;'>Estudantes</span>
<span class="t" style='left:797.06px;top:182px;font-size:5.7px;line-height:5.7px;color:#eeeeee;font-weight:400;font-family:"Liberation Sans",sans-serif;transform:translateY(0.42px) rotate(.05deg) scaleX(0.9501);'>acossa@estudantes.unisced.edu.mz</span>
<span class="t" style='left:797.06px;top:189px;font-size:5.7px;line-height:5.7px;color:#eeeeee;font-weight:400;font-family:"Liberation Sans",sans-serif;transform:translateY(0.90px) rotate(.05deg) scaleX(0.9944);'>password</span>
<span class="t" style='left:797.06px;top:204px;font-size:5.7px;line-height:5.7px;color:#eeeeee;font-weight:700;font-family:"Liberation Sans",sans-serif;transform:translateY(0.86px) rotate(.05deg) scaleX(0.9740);text-decoration:underline;text-decoration-thickness:.5px;text-underline-offset:.4px;'>Operadores</span>
<span class="t" style='left:797.06px;top:212px;font-size:5.7px;line-height:5.7px;color:#eeeeee;font-weight:400;font-family:"Liberation Sans",sans-serif;transform:translateY(0.35px) rotate(.05deg) scaleX(0.9604);'>amina.mucavele@unisced.local</span>
<span class="t" style='left:797.06px;top:219px;font-size:5.7px;line-height:5.7px;color:#eeeeee;font-weight:400;font-family:"Liberation Sans",sans-serif;transform:translateY(0.83px) rotate(.05deg) scaleX(0.9700);'>jose.nhabanga@unisced.local</span>
<span class="t" style='left:797.06px;top:227px;font-size:5.7px;line-height:5.7px;color:#eeeeee;font-weight:400;font-family:"Liberation Sans",sans-serif;transform:translateY(0.31px) rotate(.05deg) scaleX(0.9858);'>mateus.mpfumo@unisced.local</span>
<span class="t" style='left:797.06px;top:234px;font-size:5.7px;line-height:5.7px;color:#eeeeee;font-weight:400;font-family:"Liberation Sans",sans-serif;transform:translateY(0.80px) rotate(.05deg) scaleX(0.9701);'>abdul.amade@unisced.local</span>
<span class="t" style='left:797.06px;top:242px;font-size:5.7px;line-height:5.7px;color:#eeeeee;font-weight:400;font-family:"Liberation Sans",sans-serif;transform:translateY(0.28px) rotate(.05deg) scaleX(0.9783);'>carlos.mpfumo@unisced.local</span>
<span class="t" style='left:797.06px;top:249px;font-size:5.7px;line-height:5.7px;color:#eeeeee;font-weight:400;font-family:"Liberation Sans",sans-serif;transform:translateY(0.76px) rotate(.05deg) scaleX(0.9944);'>password</span>
<span class="t" style='left:797.06px;top:264px;font-size:5.7px;line-height:5.7px;color:#eeeeee;font-weight:700;font-family:"Liberation Sans",sans-serif;transform:translateY(0.73px) rotate(.05deg) scaleX(0.9813);text-decoration:underline;text-decoration-thickness:.5px;text-underline-offset:.4px;'>Devices - Serial Number</span>
<span class="t" style='left:797.06px;top:272px;font-size:5.7px;line-height:5.7px;color:#eeeeee;font-weight:400;font-family:"Liberation Sans",sans-serif;transform:translateY(0.21px) rotate(.05deg) scaleX(0.9242);'>EDT26090001</span>
<span class="t" style='left:797.06px;top:279px;font-size:5.7px;line-height:5.7px;color:#eeeeee;font-weight:400;font-family:"Liberation Sans",sans-serif;transform:translateY(0.69px) rotate(.05deg) scaleX(0.9242);'>EDT26090002</span>
<span class="t" style='left:797.06px;top:287px;font-size:5.7px;line-height:5.7px;color:#eeeeee;font-weight:400;font-family:"Liberation Sans",sans-serif;transform:translateY(0.18px) rotate(.05deg) scaleX(0.9242);'>EDT26090003</span>
<span class="t" style='left:797.06px;top:294px;font-size:5.7px;line-height:5.7px;color:#eeeeee;font-weight:400;font-family:"Liberation Sans",sans-serif;transform:translateY(0.66px) rotate(.05deg) scaleX(0.9242);'>EDT26090004</span>
<span class="t" style='left:797.06px;top:302px;font-size:5.7px;line-height:5.7px;color:#eeeeee;font-weight:400;font-family:"Liberation Sans",sans-serif;transform:translateY(0.14px) rotate(.05deg) scaleX(0.9242);'>EDT26090005</span>
<span class="t" style='left:797.06px;top:309px;font-size:5.7px;line-height:5.7px;color:#eeeeee;font-weight:400;font-family:"Liberation Sans",sans-serif;transform:translateY(0.63px) rotate(.05deg) scaleX(0.9242);'>EDT26090006</span>
<span class="t" style='left:797.06px;top:317px;font-size:5.7px;line-height:5.7px;color:#eeeeee;font-weight:400;font-family:"Liberation Sans",sans-serif;transform:translateY(0.11px) rotate(.05deg) scaleX(0.9242);'>EDT26090007</span>
<span class="t" style='left:797.06px;top:324px;font-size:5.7px;line-height:5.7px;color:#eeeeee;font-weight:400;font-family:"Liberation Sans",sans-serif;transform:translateY(0.59px) rotate(.05deg) scaleX(0.9242);'>EDT26090008</span>
<span class="t" style='left:797.06px;top:332px;font-size:5.7px;line-height:5.7px;color:#eeeeee;font-weight:400;font-family:"Liberation Sans",sans-serif;transform:translateY(0.08px) rotate(.05deg) scaleX(0.9242);'>EDT26090009</span>
<span class="t" style='left:797.06px;top:339px;font-size:5.7px;line-height:5.7px;color:#eeeeee;font-weight:400;font-family:"Liberation Sans",sans-serif;transform:translateY(0.56px) rotate(.05deg) scaleX(0.9242);'>EDT26090010</span>
<span class="t" style='left:797.06px;top:354px;font-size:5.7px;line-height:5.7px;color:#eeeeee;font-weight:700;font-family:"Liberation Sans",sans-serif;transform:translateY(0.52px) rotate(.05deg) scaleX(0.9429);text-decoration:underline;text-decoration-thickness:.5px;text-underline-offset:.4px;'>Limpesa de Cach</span>
<span class="t" style='left:797.06px;top:362px;font-size:5.7px;line-height:5.7px;color:#eeeeee;font-weight:400;font-family:"Liberation Sans",sans-serif;transform:translateY(0.01px) rotate(.05deg) scaleX(0.9968);'>php artisan optimize:clear</span>
<span class="t" style='left:797.06px;top:369px;font-size:5.7px;line-height:5.7px;color:#eeeeee;font-weight:400;font-family:"Liberation Sans",sans-serif;transform:translateY(0.49px) rotate(.05deg) scaleX(0.9914);'>php artisan route:clear</span>
<span class="t" style='left:797.06px;top:384px;font-size:5.7px;line-height:5.7px;color:#eeeeee;font-weight:700;font-family:"Liberation Sans",sans-serif;transform:translateY(0.46px) rotate(.05deg) scaleX(0.9634);text-decoration:underline;text-decoration-thickness:.5px;text-underline-offset:.4px;'>Dispositivos prontos</span>
<span class="t" style='left:797.06px;top:391px;font-size:5.7px;line-height:5.7px;color:#eeeeee;font-weight:400;font-family:"Liberation Sans",sans-serif;transform:translateY(0.94px) rotate(.05deg) scaleX(0.9506);'>WSX202509221376</span>
<span class="t" style='left:797.06px;top:399px;font-size:5.7px;line-height:5.7px;color:#eeeeee;font-weight:400;font-family:"Liberation Sans",sans-serif;transform:translateY(0.42px) rotate(.05deg) scaleX(0.9506);'>WSX202509224507</span>
<span class="t" style='left:797.06px;top:406px;font-size:5.7px;line-height:5.7px;color:#eeeeee;font-weight:400;font-family:"Liberation Sans",sans-serif;transform:translateY(0.91px) rotate(.05deg) scaleX(0.9506);'>WSX202509228087</span>
<span class="t" style='left:797.06px;top:414px;font-size:5.7px;line-height:5.7px;color:#eeeeee;font-weight:400;font-family:"Liberation Sans",sans-serif;transform:translateY(0.39px) rotate(.05deg) scaleX(0.9506);'>WSX202509229897</span>
<span class="t" style='left:797.06px;top:421px;font-size:5.7px;line-height:5.7px;color:#eeeeee;font-weight:400;font-family:"Liberation Sans",sans-serif;transform:translateY(0.87px) rotate(.05deg) scaleX(0.9506);'>WSX202509221077</span>
<span class="t" style='left:797.06px;top:436px;font-size:5.7px;line-height:5.7px;color:#eeeeee;font-weight:700;font-family:"Liberation Sans",sans-serif;transform:translateY(0.84px) rotate(.05deg) scaleX(0.9717);text-decoration:underline;text-decoration-thickness:.5px;text-underline-offset:.4px;'>Dispositivos Ivalido</span>
<span class="t" style='left:797.06px;top:444px;font-size:5.7px;line-height:5.7px;color:#eeeeee;font-weight:400;font-family:"Liberation Sans",sans-serif;transform:translateY(0.32px) rotate(.05deg) scaleX(0.9506);'>WSX202509222302</span>
<div class="abs" style="left:831.3px;top:294px;width:3.2px;height:5.8px;background:transparent;border:.6px solid #c8c8c8;border-right:none"></div>
<span class="t" style='left:797.58px;top:513px;font-size:7px;line-height:7px;color:#dcdcdc;font-weight:700;font-family:"Liberation Sans",sans-serif;transform:translateY(0.50px) rotate(.05deg) scaleX(0.9727);'>B</span>
<span class="t" style='left:815.38px;top:513px;font-size:7px;line-height:7px;color:#dcdcdc;font-weight:400;font-family:"Liberation Serif",serif;transform:translateY(0.50px) rotate(.05deg) scaleX(1.5448);font-style:italic;'>I</span>
<span class="t" style='left:831.21px;top:513px;font-size:6.5px;line-height:6.5px;color:#dcdcdc;font-weight:400;font-family:"Liberation Sans",sans-serif;transform:translateY(0.50px) rotate(.05deg) scaleX(1.0162);text-decoration:underline;text-decoration-thickness:.6px;'>U</span>
<span class="t" style='left:846.46px;top:514px;font-size:5.6px;line-height:5.6px;color:#bdbdbd;font-weight:400;font-family:"Liberation Sans",sans-serif;transform:translateY(0.18px) rotate(.05deg) scaleX(1.1546);text-decoration:line-through;text-decoration-thickness:.5px;'>ab</span>
<svg style="left:864px;top:513px" width="26" height="8" viewBox="0 0 26 8"><g stroke="#dcdcdc" stroke-width=".9" fill="none"><path d="M.8 1.600h5.600M.8 3.800h5.600M.8 6h5.600"/><rect x="17.400" y="1.200" width="6" height="5" stroke-width=".7"/></g><path d="M18 5.800l1.600-2 1.200 1.300.8-.7 1.400 1.400z" fill="#dcdcdc"/><circle cx="21.800" cy="2.600" r=".6" fill="#dcdcdc"/></svg>
<div class="abs" style="left:126px;top:525.3px;width:771px;height:20px;background:#fafafa;"></div>
<div class="abs" style="left:133.1px;top:525.3px;width:8.8px;height:20px;background:#1cb5d2;"></div>
<div class="abs" style="left:151.4px;top:525.3px;width:8.5px;height:20px;background:#1cb5d2;"></div>
<div class="abs" style="left:169.2px;top:525.3px;width:7.4px;height:20px;background:#1593d9;"></div>
<svg style="left:640px;top:525.300px" width="257" height="20" viewBox="0 0 257 20"><defs><linearGradient id="sg" x1="0" y1="0" x2="0" y2="1"><stop offset="0" stop-color="#2a6a9c"/><stop offset="1" stop-color="#1d4f7e"/></linearGradient></defs><path d="M25.500 0H257V3.800H21.500z" fill="#19b3cc"/><path d="M47.500 3.800H257V20H28z" fill="url(#sg)"/></svg>
<div class="abs" style="left:897px;top:110.5px;width:127px;height:435px;background:#13171a;"></div>
</div>
<div class="abs" style="left:251px;top:545.2px;width:773px;height:0.9px;background:#8f9aa0;"></div>
<div class="abs" style="left:0px;top:546px;width:1024px;height:30px;background:linear-gradient(90deg,#1d343f 0%,#1d343f 28%,#1b2e3d 55%,#19293a 80%,#182739 100%);"></div>
<svg style="left:12px;top:554.500px" width="13" height="13" viewBox="0 0 13 13"><g fill="#ffffff"><path d="M0 1.800L5.300 1v5.200H0zM6 .9L12.800 0v6.200H6zM0 6.900h5.300v5.200L0 11.300zM6 6.900h6.800V13L6 12.100z"/></g></svg>
<div class="abs" style="left:36px;top:545.6px;width:215.6px;height:30.4px;background:#f2f2f2;border:.8px solid #c6c6c6"></div>
<svg style="left:44px;top:555px" width="14" height="14" viewBox="0 0 14 14"><g fill="none" stroke="#3a3a3a" stroke-width="1.100"><circle cx="8.600" cy="5.300" r="3.700"/><path d="M6 8.200L1.300 12.800"/></g></svg>
<span class="t" style='left:65.29px;top:556px;font-size:11.8px;line-height:11.8px;color:#3d3d3d;font-weight:400;font-family:"Liberation Sans",sans-serif;transform:translateY(0.60px) rotate(.05deg) scaleX(0.9260);'>Type here to search</span>
<svg style="left:193px;top:546px" width="60" height="30" viewBox="0 0 60 30"><defs><filter id="b2" x="-5%" y="-5%" width="110%" height="110%"><feGaussianBlur stdDeviation=".4"/></filter><clipPath id="sq"><rect x="0" y="1" width="58.500" height="29"/></clipPath></defs><g filter="url(#b2)" clip-path="url(#sq)">
<path d="M3 23.500 Q10 24.500 17.500 25 Q25 26 30.500 27.800 Q36 27.500 40 25 Q45 21 47 15.500 Q48.500 11 49.800 6.500" stroke="#9a6a34" stroke-width="1.300" fill="none"/>
<path d="M29.500 27 L33.500 27 L33.200 30 L30.500 30Z" fill="#8a5a28"/>
<path d="M4 25.500 Q8 26.800 13 26.500" stroke="#b08a58" stroke-width=".9" fill="none"/>
<path d="M6.800 4.500 Q9 8 7.200 12.500 Q4.800 9 6.800 4.500Z" fill="#f6a93a"/>
<path d="M1.800 15 Q6 15.500 9.500 21.500 Q5 23 2.500 19.500Z" fill="#f5a033"/>
<path d="M11.500 16.500 Q16.500 18 17.800 23.500 Q13.500 24.500 11.800 21Z" fill="#ee6f26"/>
<path d="M46 11.500 Q47.500 6 52.500 5 Q53.500 10.500 49.500 14.500 Q46.500 14.500 46 11.500Z" fill="#f7a637"/>
<path d="M46.500 20 Q50 16.500 56 17 Q54.500 22.500 49.500 24 Q46.500 23 46.500 20Z" fill="#ee6a28"/>
<path d="M45 25.500 Q49 24.500 52.500 27 Q49.500 29.500 45.500 28.500Z" fill="#f8b13c"/>
<path d="M37 23.500 C40.500 20 39 11 41.500 6.500 C43.500 3 47.500 1.500 50 3.800 C47 3.800 45 6 44.300 9.500 C43.500 14 43.500 20.500 38.500 25Z" fill="#cf9272"/>
<path d="M39 22 C41.500 18.500 40.500 11.500 42.500 7.500" stroke="#e3b79c" stroke-width="1.100" fill="none"/>
<path d="M25.500 12.500 Q33 13 36.500 19.500 Q38 25.500 33 27.300 L25 27 Q22.500 22 23.500 16Z" fill="#c98d5e"/>
<path d="M29 14.500 Q34.500 16 36 21.500" stroke="#7a4a28" stroke-width="1.200" fill="none"/>
<path d="M28.300 16.300 Q33 17.500 34.500 22.500" stroke="#f4e6d2" stroke-width="1.100" fill="none"/>
<path d="M23 14 Q26.500 15.500 26.500 20 Q26.500 24.500 24.800 26.800 L22.500 24 Q21.500 18 23 14Z" fill="#f3dfc8"/>
<ellipse cx="32.500" cy="25" rx="3.300" ry="2.600" fill="#d29a6c"/>
<path d="M23.500 21.500 L24.300 26.500 M27 22 L27.500 26.800" stroke="#b87a4a" stroke-width="1.100"/>
<ellipse cx="20.600" cy="10" rx="4.600" ry="3.900" fill="#d09262"/>
<ellipse cx="17.700" cy="12.200" rx="2.600" ry="1.700" fill="#f4e6d6"/>
<ellipse cx="22" cy="5.800" rx="1.100" ry="1.700" fill="#b87a4c"/><ellipse cx="26" cy="6.300" rx="1.400" ry="1.900" fill="#b87a4c"/>
<ellipse cx="20.900" cy="9.600" rx="1" ry=".9" fill="#3a2a55"/>
<circle cx="16" cy="11.200" r=".5" fill="#7a4a3a"/>
</g></svg>
<svg style="left:263px;top:554.500px" width="14" height="13" viewBox="0 0 14 13"><g fill="none" stroke="#f2f2f2" stroke-width="1"><rect x="1.800" y="3.200" width="7.600" height="6.600"/><path d="M.6 1.500v1.700M.6 9.800v1.700M.6 1h9.900M.6 12h9.900M10.500 1.500v1.700M10.500 9.800v1.700"/><path d="M12.500 4v1M12.500 7.500v1.500" stroke-width="1.300"/></g></svg>
<div class="abs" style="left:290px;top:546px;width:35.6px;height:30px;background:#a66a33;"></div>
<div class="abs" style="left:290px;top:574px;width:35.6px;height:2px;background:#f08225;"></div>
<svg style="left:298.500px;top:551px" width="19" height="19" viewBox="0 0 19 19"><defs><linearGradient id="eg" x1="0" y1="0" x2="1" y2="1"><stop offset="0" stop-color="#35c1f1"/><stop offset=".5" stop-color="#1b9de2"/><stop offset="1" stop-color="#0c59a4"/></linearGradient><linearGradient id="eg2" x1="0" y1="0" x2="1" y2="0"><stop offset="0" stop-color="#52d86a"/><stop offset="1" stop-color="#2fc2c8"/></linearGradient></defs>
<circle cx="9.500" cy="9.500" r="9" fill="url(#eg)"/><path d="M.6 8.500C1.500 3.500 5.500.5 9.800.5c5 0 8.600 3.500 8.700 7.500 0 2.500-1.800 4-3.800 4-1.500 0-2.300-.6-2.300-1.300 0-.6.800-.9.800-2.200 0-1.800-1.800-3.400-4.400-3.400C5.500 5.100 2 6 .6 8.500z" fill="url(#eg2)"/><path d="M6.500 11c0 3.500 2.600 6.500 6.500 6.800-1 .5-2.300.8-3.500.8C4.500 18.600.5 14.500.5 9.500c1.500-2.500 4.500-3.500 6.800-3C6.800 7.800 6.500 9.500 6.500 11z" fill="#1565b8"/></svg>
<svg style="left:335px;top:551px" width="19" height="19" viewBox="0 0 19 19"><path d="M5.800 4.500V3.400a1.600 1.600 0 0 1 1.600-1.600h4.200a1.600 1.600 0 0 1 1.600 1.600v1.100" fill="none" stroke="#3aa0e8" stroke-width="1.200"/><rect x="1.200" y="4.300" width="16.600" height="13.600" rx="2" fill="#f4f4f6"/><rect x="6" y="7.400" width="3.100" height="3.100" fill="#f25022"/><rect x="9.800" y="7.400" width="3.100" height="3.100" fill="#7fba00"/><rect x="6" y="11.200" width="3.100" height="3.100" fill="#00a4ef"/><rect x="9.800" y="11.200" width="3.100" height="3.100" fill="#ffb900"/></svg>
<svg style="left:372px;top:552px" width="19" height="17" viewBox="0 0 19 17"><path d="M1 2.500a1 1 0 0 1 1-1h5l1.500 1.800H17a1 1 0 0 1 1 1V5H1z" fill="#e0a526"/><rect x="1" y="4.200" width="17" height="10.800" rx=".8" fill="#f7cf52"/><path d="M5 15v-4.500h9V15" fill="none" stroke="#3f8fd8" stroke-width="1.800"/></svg>
<svg style="left:408.500px;top:552.500px" width="19" height="16" viewBox="0 0 19 16"><rect x=".5" y="4.500" width="18" height="11" rx=".8" fill="#1f8fe0"/><path d="M.5 5.200L9.500.3l9 4.900-9 5.300z" fill="#0a5cae"/><path d="M2.200 4.200h14.600v4L9.500 12 2.200 8.200z" fill="#e9f3fc"/><path d="M.5 5.200l9 5.800 9-5.800v10.300H.5z" fill="#2ea3f0"/></svg>
<div class="abs" style="left:440px;top:574px;width:30px;height:2px;background:#84b8e4;"></div>
<svg style="left:444px;top:550.500px" width="30" height="24" viewBox="0 0 30 24"><path d="M10.300 1.600a8 8 0 0 0-6.900 12.100l-1.200 4.300 4.500-1.100A8 8 0 1 0 10.300 1.600z" fill="#1d333e" stroke="#2fd15a" stroke-width="1.700"/><path d="M7.600 5.800c-.8.600-1 1.700-.5 3 .8 2 2.600 3.700 4.700 4.400 1 .3 1.900-.1 2.300-.9l-1.700-1.300-.9.800c-1.200-.5-2.200-1.600-2.700-2.800l.8-.9z" fill="#2fd15a"/><rect x="13.200" y="10" width="15" height="11.600" rx="5.800" fill="#2a2a2d" stroke="#d8d8da" stroke-width=".9"/></svg>
<span class="t" style='left:458.86px;top:562px;font-size:9px;line-height:9px;color:#ffffff;font-weight:700;font-family:"Liberation Sans",sans-serif;transform:translateY(0.47px) rotate(.05deg) scaleX(1.1583);'>29</span>
<div class="abs" style="left:476.6px;top:574px;width:33.4px;height:2px;background:#84b8e4;"></div>
<svg style="left:481.500px;top:551px" width="24" height="21" viewBox="0 0 24 21"><circle cx="9.500" cy="9.500" r="9" fill="#e8453c"/><path d="M9.500 9.500L1.700 5A9 9 0 0 0 8 18.400z" fill="#34a853"/><path d="M9.500 9.500L8 18.400A9 9 0 0 0 17.300 5z" fill="#fbbc05"/><path d="M1.700 5A9 9 0 0 1 17.300 5H9.500z" fill="#ea4335"/><circle cx="9.500" cy="9.500" r="4.200" fill="#fff"/><circle cx="9.500" cy="9.500" r="3.300" fill="#4285f4"/><circle cx="15.800" cy="13.500" r="4.500" fill="#5c4a42"/><circle cx="15.800" cy="12.400" r="2" fill="#d9b59a"/><path d="M12.600 17c.3-2.300 6-2.300 6.400 0z" fill="#f0f0f0"/></svg>
<div class="abs" style="left:513px;top:574px;width:30.6px;height:2px;background:#84b8e4;"></div>
<svg style="left:519px;top:551.500px" width="19" height="18" viewBox="0 0 19 18"><rect x="7" y="1.500" width="11" height="15" rx=".6" fill="#f4f6fa"/><path d="M9 4.500h7.500M9 7h7.500M9 9.500h7.500M9 12h7.500M9 14.500h7.500" stroke="#2b5fb4" stroke-width=".9"/><rect x=".5" y="3.500" width="10.500" height="11" fill="#2a5caa"/><path d="M2.300 6l1.200 6 1.900-5.200 1.900 5.200 1.200-6" fill="none" stroke="#fff" stroke-width="1.100"/></svg>
<div class="abs" style="left:550px;top:574px;width:30px;height:2px;background:#84b8e4;"></div>
<svg style="left:556px;top:551.500px" width="19" height="18" viewBox="0 0 19 18"><rect x="7" y="1.500" width="11" height="15" rx=".6" fill="#f2f8f3"/><path d="M9 4.500h7.500M9 7.500h7.500M9 10.500h7.500M9 13.500h7.500M13 2.500v13" stroke="#1e8449" stroke-width=".9"/><rect x=".5" y="3.500" width="10.500" height="11" fill="#1f7a45"/><path d="M3.300 6l4.400 6M7.700 6L3.300 12" stroke="#fff" stroke-width="1.200"/></svg>
<div class="abs" style="left:583.8px;top:546px;width:33.5px;height:30px;background:#3b4e59;"></div>
<div class="abs" style="left:583.8px;top:574px;width:33.5px;height:2px;background:#8cc0ec;"></div>
<div class="abs" style="left:617.3px;top:546px;width:0.6px;height:30px;background:#4a5b65;"></div>
<svg style="left:591.500px;top:550.500px" width="20" height="20" viewBox="0 0 20 20"><defs><linearGradient id="zg" x1="0" y1="0" x2="0" y2="1"><stop offset="0" stop-color="#2f7bf6"/><stop offset="1" stop-color="#0b4fe0"/></linearGradient></defs><rect x=".5" y=".5" width="19" height="19" rx="7.500" fill="url(#zg)"/></svg>
<span class="t" style='left:594.93px;top:555px;font-size:9.5px;line-height:9.5px;color:#ffffff;font-weight:700;font-family:"Liberation Sans",sans-serif;transform:translateY(0.86px) rotate(.05deg) scaleX(1.0109);'>zm</span>
<div class="abs" style="left:623.6px;top:574px;width:30px;height:2px;background:#84b8e4;"></div>
<svg style="left:627px;top:549.500px" width="24" height="22" viewBox="0 0 24 22"><path d="M10 5.500C4.500 5.500 1 9 1 13c0 4 3.500 6.500 8.500 6.500 2 0 2-1.500 1.200-2.600-.7-1 .2-2.400 2-2.400h2.800c2.500 0 3.500-1.500 3.500-3.300 0-3-4-5.700-9-5.700z" fill="#e6e8ee" stroke="#6a7a9a" stroke-width=".7"/><circle cx="5" cy="11" r="1.500" fill="#e4483c"/><circle cx="8.500" cy="8.500" r="1.500" fill="#f0b020"/><circle cx="12.800" cy="8.800" r="1.400" fill="#3ca55c"/><circle cx="5.500" cy="15" r="1.400" fill="#3a7be0"/><path d="M21.500 1l1 .8-8 11.500-1.600-1.200z" fill="#e8962e"/><path d="M12.900 12.100l1.600 1.200-1.800 2.500c-.8.800-2.300.2-1.600-1.200z" fill="#c0c4cc"/></svg>
<svg style="left:711.500px;top:550px" width="19" height="20" viewBox="0 0 19 20"><g fill="#56b22f"><rect x="1" y="15.500" width="2.600" height="3" /><rect x="4.800" y="13.500" width="2.600" height="5"/><rect x="8.600" y="11" width="2.600" height="7.500"/><rect x="12.400" y="8" width="2.600" height="10.500"/></g><path d="M1 13L13.500 3.500" stroke="#56b22f" stroke-width="1.800" fill="none"/><path d="M9.500 1.300h7.300v7.300z" fill="#56b22f"/></svg>
<span class="t" style='left:734.75px;top:556px;font-size:10.8px;line-height:10.8px;color:#f4f4f4;font-weight:400;font-family:"Liberation Sans",sans-serif;transform:translateY(0.12px) rotate(.05deg) scaleX(0.9118);'>PSI 20</span>
<span class="t" style='left:769.65px;top:556px;font-size:10.8px;line-height:10.8px;color:#35b84a;font-weight:400;font-family:"Liberation Sans",sans-serif;transform:translateY(0.12px) rotate(.05deg) scaleX(0.9659);'>+0,28%</span>
<svg style="left:822px;top:552px" width="90" height="18" viewBox="0 0 90 18"><g fill="none" stroke="#f0f0f0" stroke-width="1.100">
<path d="M2.200 11.500l4-4 4 4"/>
<rect x="21.300" y="2.800" width="4.600" height="8.500" rx="2.300" fill="#f0f0f0"/><path d="M19.800 9.500c0 5 7.600 5 7.600 0M23.600 13.300v2M21.300 15.500h4.600" stroke-width=".9"/>
<rect x="37.500" y="7.500" width="9" height="4.500" stroke-width=".9"/><rect x="38.500" y="8.500" width="6" height="2.500" fill="#f0f0f0" stroke="none"/><path d="M47.200 9v1.500M36.500 4.500l2 2.600M39 4.800h2.500" stroke-width=".9"/>
<path d="M56.500 14c0-4.500 3.500-8 8-8" stroke="#8a969c" stroke-width=".9"/><path d="M59 14c0-3 2.400-5.500 5.500-5.500" stroke-width=".9"/><path d="M61.500 14c0-1.700 1.300-3 3-3" stroke-width=".9"/><circle cx="64" cy="13.500" r=".8" fill="#f0f0f0" stroke="none"/>
<path d="M72.500 7.800h2l2.700-2.500v8l-2.700-2.500h-2z" stroke-width=".9"/><path d="M79 7.300c1 1 1 3 0 4M80.800 5.800c1.800 1.800 1.800 5.200 0 7M82.600 4.400c2.500 2.500 2.500 7.300 0 9.800" stroke-width=".8"/>
</g></svg>
<span class="t" style='left:913.64px;top:550px;font-size:9.3px;line-height:9.3px;color:#f0f0f0;font-weight:400;font-family:"Liberation Sans",sans-serif;transform:translateY(0.44px) rotate(.05deg) scaleX(0.8747);'>ENG</span>
<span class="t" style='left:913.64px;top:563px;font-size:9.3px;line-height:9.3px;color:#f0f0f0;font-weight:400;font-family:"Liberation Sans",sans-serif;transform:translateY(0.94px) rotate(.05deg) scaleX(0.9143);'>INTL</span>
<span class="t" style='left:944.04px;top:550px;font-size:9.3px;line-height:9.3px;color:#f0f0f0;font-weight:400;font-family:"Liberation Sans",sans-serif;transform:translateY(0.44px) rotate(.05deg) scaleX(0.9308);'>3:40 PM</span>
<span class="t" style='left:939.94px;top:563px;font-size:9.3px;line-height:9.3px;color:#f0f0f0;font-weight:400;font-family:"Liberation Sans",sans-serif;transform:translateY(0.94px) rotate(.05deg) scaleX(0.9751);'>9/26/2025</span>
<svg style="left:990px;top:552.500px" width="24" height="22" viewBox="0 0 24 22"><path d="M2.300 2.300h11.700v8.400h-7.500l-2.500 2.600v-2.600h-1.700z" fill="#f0f0f0"/><path d="M4.300 5h7.700M4.300 7.700h7.700" stroke="#1a2a3c" stroke-width=".9"/><circle cx="15" cy="14" r="5.300" fill="#242428" stroke="#c8c8cc" stroke-width=".9"/></svg>
<span class="t" style='left:1001.77px;top:562px;font-size:8.8px;line-height:8.8px;color:#ffffff;font-weight:700;font-family:"Liberation Sans",sans-serif;transform:translateY(0.95px) rotate(.05deg) scaleX(1.2804);'>2</span>
<div class="abs" style="left:1019.5px;top:546px;width:0.6px;height:30px;background:#6a7880;"></div>
</div></body></html>
